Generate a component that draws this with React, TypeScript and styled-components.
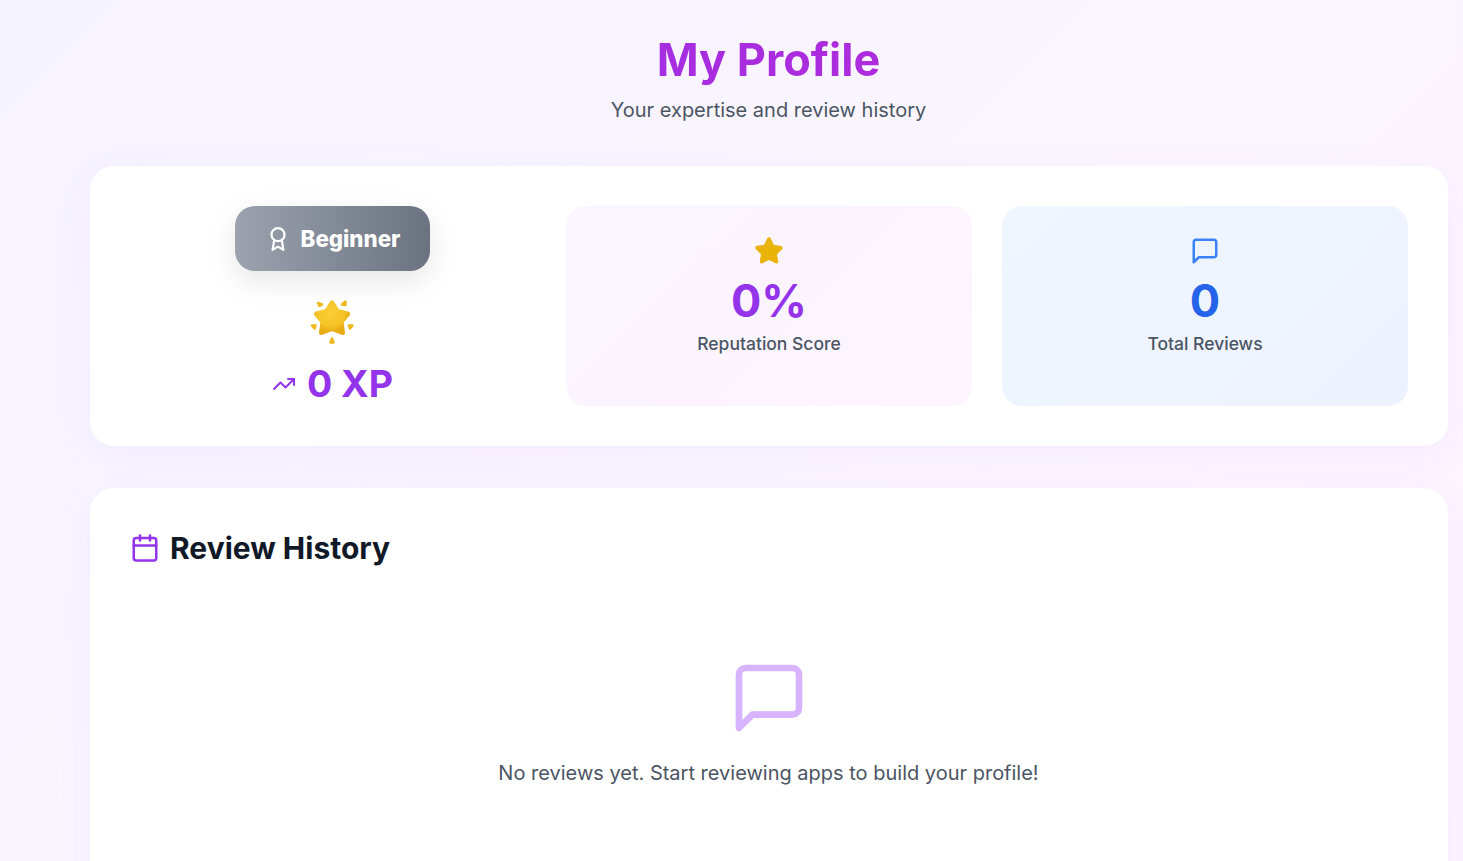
import React from 'react';
import styled, { createGlobalStyle } from 'styled-components';
import { Calendar, Star, TrendingUp } from 'lucide-react';

const GlobalStyle = createGlobalStyle`
    html,
    body {
        margin: 0;
        height: 100%;
        overflow: hidden;
    }

    body {
        font-family: 'Inter', 'Liberation Sans', sans-serif;
    }
`;

const SparkleStar = () => (
    <svg width='46' height='46' viewBox='0 0 46 46'>
        <defs>
            <radialGradient id='starFill' cx='45%' cy='35%' r='65%'>
                <stop offset='0%' stopColor='#f9cf35' />
                <stop offset='65%' stopColor='#f6c428' />
                <stop offset='100%' stopColor='#e8ab12' />
            </radialGradient>
        </defs>
        <path
            d='M22 5L27.500 13.500L37.500 16L31 23.500L32.500 34.500L22 30.500L11.500 34.500L13 23.500L6.500 16L16.500 13.500Z'
            fill='url(#starFill)'
            stroke='url(#starFill)'
            strokeWidth='5'
            strokeLinejoin='round'
        />
        <g fill='#efb81c' stroke='#efb81c' strokeWidth='2.500' strokeLinejoin='round'>
            <path d='M8 5L12 6.500L9.500 8Z' />
            <path d='M35.500 3.500L35.500 7L32 6.500Z' />
            <path d='M2 27.500L5.500 27.500L4.500 30.500Z' />
            <path d='M42.500 27.500L39 27.500L40 30.500Z' />
            <path d='M22 40.500L23.500 44.500H20.500Z' />
        </g>
    </svg>
);

const LineIcon = ({ size, color, children }: { size: number; color: string; children: React.ReactNode }) => (
    <svg
        width={size}
        height={size}
        viewBox='0 0 24 24'
        fill='none'
        stroke={color}
        strokeWidth='2'
        strokeLinecap='round'
        strokeLinejoin='round'
    >
        {children}
    </svg>
);

const BubbleIcon = ({ size, color }: { size: number; color: string }) => (
    <LineIcon size={size} color={color}>
        <path d='M21 15a2 2 0 0 1-2 2H7l-4 4V5a2 2 0 0 1 2-2h14a2 2 0 0 1 2 2z' />
    </LineIcon>
);

const RibbonIcon = ({ size, color }: { size: number; color: string }) => (
    <LineIcon size={size} color={color}>
        <circle cx='12' cy='8' r='6' />
        <path d='M15.477 12.890 17 22l-5-3-5 3 1.523-9.110' />
    </LineIcon>
);

const App = () => {
    return (
        <Page>
            <GlobalStyle />
            <Header>
                <Title>My Profile</Title>
                <Subtitle>Your expertise and review history</Subtitle>
            </Header>
            <Card>
                <StatsGrid>
                    <LevelColumn>
                        <LevelBadge>
                            <RibbonIcon size={26} color='#ffffff' />
                            Beginner
                        </LevelBadge>
                        <LevelStar>
                            <SparkleStar />
                        </LevelStar>
                        <XpRow>
                            <TrendingUp size={24} strokeWidth={2} />
                            0 XP
                        </XpRow>
                    </LevelColumn>
                    <StatBox $tone='purple'>
                        <Star size={30} strokeWidth={2} fill='#eab308' color='#eab308' />
                        <StatValue $tone='purple'>0%</StatValue>
                        <StatLabel>Reputation Score</StatLabel>
                    </StatBox>
                    <StatBox $tone='blue'>
                        <BubbleIcon size={30} color='#3b82f6' />
                        <StatValue $tone='blue'>0</StatValue>
                        <StatLabel>Total Reviews</StatLabel>
                    </StatBox>
                </StatsGrid>
            </Card>
            <HistoryCard>
                <HistoryTitle>
                    <Calendar size={30} strokeWidth={2} color='#9333ea' />
                    Review History
                </HistoryTitle>
                <EmptyState>
                    <BubbleIcon size={80} color='#d8b4fe' />
                    <EmptyText>No reviews yet. Start reviewing apps to build your profile!</EmptyText>
                </EmptyState>
            </HistoryCard>
        </Page>
    );
};

export default App;

const Page = styled.div`
    box-sizing: border-box;
    height: 861px;
    overflow: hidden;
    padding: 32px 15px 0 90px;
    background: linear-gradient(135deg, #f5f3ff 0%, #faf5ff 50%, #fdf4ff 100%);
`;

const Header = styled.header`
    text-align: center;
    margin-bottom: 42px;
    padding-right: 1px;
`;

const Title = styled.h1`
    margin: 0 0 8px;
    font-size: 45px;
    line-height: 56px;
    font-weight: 700;
    color: #a62ce0;
    background: linear-gradient(90deg, #9333ea, #c026d3);
    -webkit-background-clip: text;
    background-clip: text;
    -webkit-text-fill-color: transparent;
`;

const Subtitle = styled.p`
    margin: 0;
    font-size: 20px;
    line-height: 28px;
    color: #4b5563;
`;

const Card = styled.section`
    box-sizing: border-box;
    padding: 40px;
    background: #ffffff;
    border-radius: 24px;
    box-shadow: 0 10px 40px rgba(147, 51, 234, 0.05);
`;

const StatsGrid = styled.div`
    display: grid;
    grid-template-columns: repeat(3, 1fr);
    grid-auto-rows: 200px;
    gap: 30px;
`;

const LevelColumn = styled.div`
    display: flex;
    flex-direction: column;
    align-items: center;
    padding-right: 1px;

    > * {
        flex-shrink: 0;
    }
`;

const LevelBadge = styled.div`
    display: flex;
    align-items: center;
    justify-content: center;
    gap: 10px;
    width: 195px;
    height: 65px;
    border-radius: 20px;
    font-size: 22.3px;
    font-weight: 800;
    color: #ffffff;
    background: linear-gradient(90deg, #9ca3af, #6b7280);
    box-shadow: 0 10px 30px rgba(0, 0, 0, 0.1);
`;

const LevelStar = styled.div`
    display: flex;
    margin-top: 27px;
    height: 46px;
`;

const XpRow = styled.div`
    display: flex;
    align-items: center;
    gap: 11px;
    margin-top: 16px;
    font-size: 37.5px;
    line-height: 48px;
    font-weight: 700;
    color: #9333ea;
`;

const StatBox = styled.div<{ $tone: 'purple' | 'blue' }>`
    display: flex;
    flex-direction: column;
    align-items: center;
    box-sizing: border-box;
    padding-top: 30px;
    border-radius: 20px;
    background: ${(p) =>
        p.$tone === 'purple'
            ? 'linear-gradient(135deg, #faf5ff, #fdf4ff)'
            : 'linear-gradient(135deg, #eff6ff, #eef2ff)'};
`;

const StatValue = styled.div<{ $tone: 'purple' | 'blue' }>`
    margin-top: 11px;
    font-size: 45px;
    line-height: 48px;
    font-weight: 700;
    color: ${(p) => (p.$tone === 'purple' ? '#9333ea' : '#2563eb')};
`;

const StatLabel = styled.div`
    margin-top: 5px;
    font-size: 17.5px;
    line-height: 28px;
    font-weight: 500;
    color: #4b5563;
`;

const HistoryCard = styled(Card)`
    margin-top: 42px;
    height: 500px;
`;

const HistoryTitle = styled.h2`
    display: flex;
    align-items: center;
    gap: 10px;
    margin: 0;
    font-size: 30px;
    line-height: 40px;
    font-weight: 650;
    color: #111827;
`;

const EmptyState = styled.div`
    display: flex;
    flex-direction: column;
    align-items: center;
    margin-top: 90px;
    padding-right: 1px;
`;

const EmptyText = styled.p`
    margin: 21px 0 0;
    font-size: 20px;
    line-height: 28px;
    color: #4b5563;
`;
